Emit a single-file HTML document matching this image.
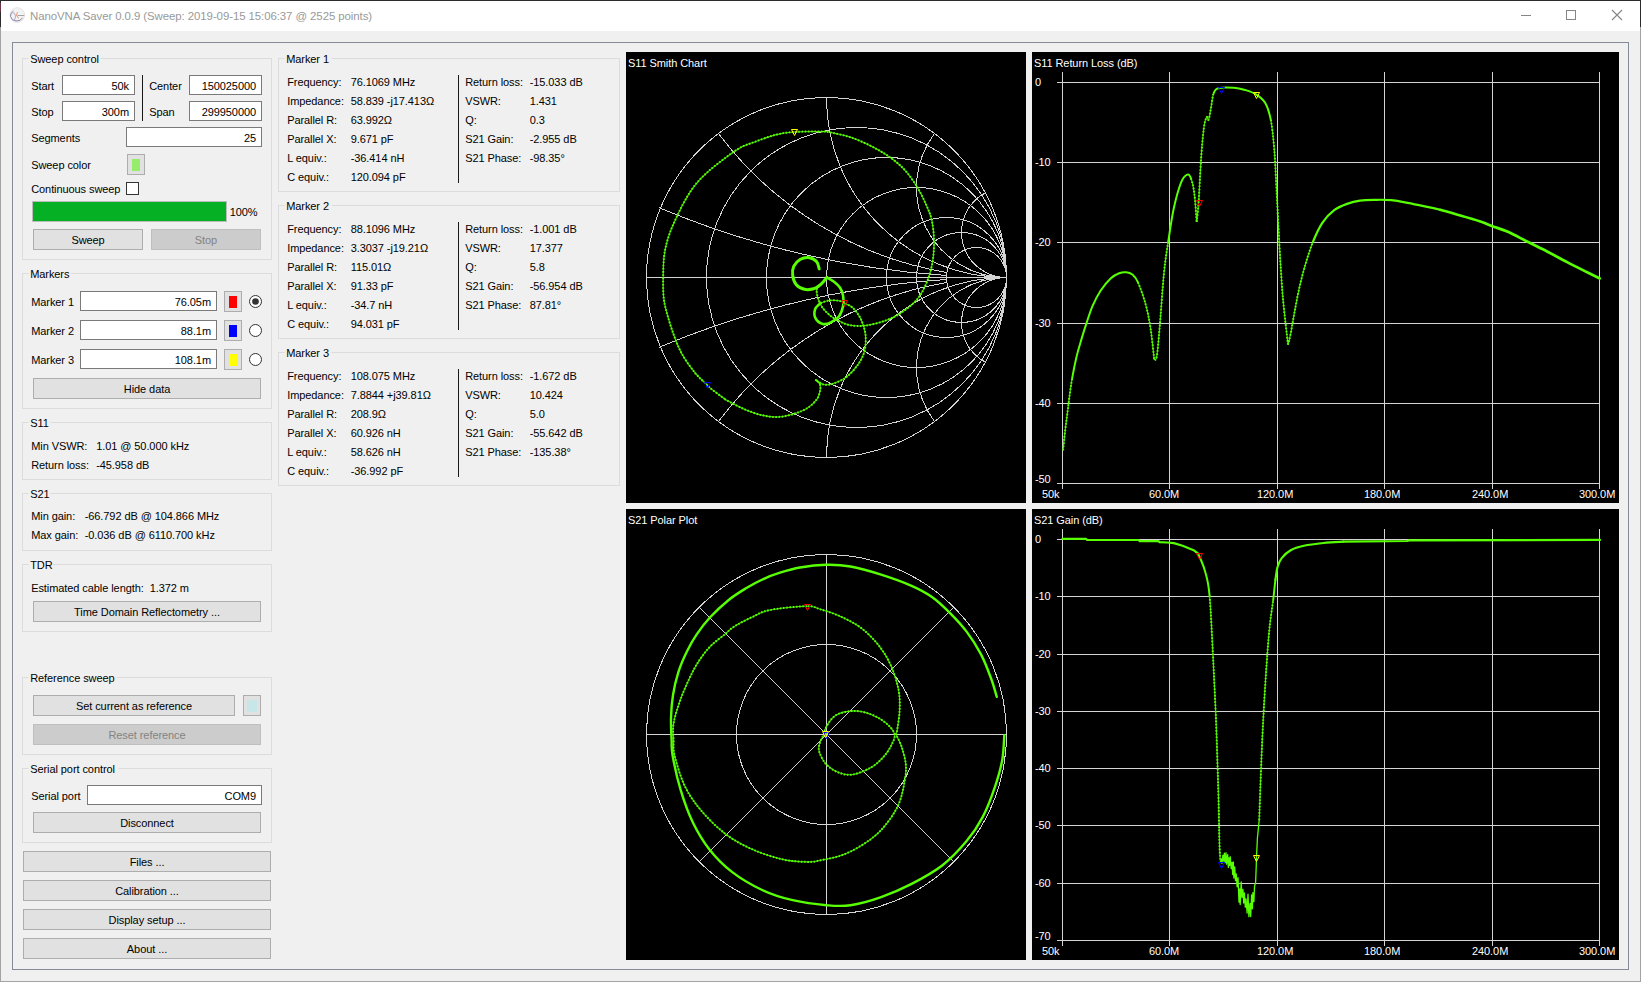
<!DOCTYPE html>
<html><head><meta charset="utf-8"><title>NanoVNA Saver</title>
<style>html,body{margin:0;padding:0;background:#f0f0f0;overflow:hidden}svg{display:block}text{font-family:"Liberation Sans",sans-serif;font-size:11px;letter-spacing:-0.08px}</style>
</head><body>
<svg width="1641" height="982" viewBox="0 0 1641 982">
<rect x="0" y="0" width="1641" height="982" fill="#f0f0f0"/>
<rect x="0" y="0" width="1641" height="31" fill="#ffffff"/>
<rect x="0" y="0" width="1641" height="1" fill="#2b2b2b"/>
<rect x="0" y="0" width="1" height="982" fill="#a3a3a3"/>
<rect x="0" y="0" width="1" height="27" fill="#2b2b2b"/>
<rect x="0" y="3" width="1" height="9" fill="#6a3040"/>
<rect x="1640" y="0" width="1" height="982" fill="#a3a3a3"/>
<rect x="1640" y="0" width="1" height="27" fill="#2b2b2b"/>
<rect x="0" y="981" width="1641" height="1" fill="#a3a3a3"/>
<g><circle cx="17.3" cy="15" r="7.3" fill="#f3f3f3" stroke="#dedede" stroke-width="0.8"/><path d="M17.5,15.5 L24.3,15.5" stroke="#9a9aa2" stroke-width="0.9"/><path d="M13.5,11 Q10,13 10.5,16.5 Q11.5,20.5 16,21 Q20.5,21.2 22.5,18" fill="none" stroke="#8c86aa" stroke-width="1"/><path d="M12.5,13 Q15,12 15.5,16 Q15.5,19 14,20.5" fill="none" stroke="#a49cc0" stroke-width="0.8"/><path d="M17.6,12 L16.4,15 L18.6,18.5" fill="none" stroke="#e0906a" stroke-width="0.9"/></g>
<text x="30" y="20" fill="#999999" font-size="12.8" textLength="342" lengthAdjust="spacingAndGlyphs">NanoVNA Saver 0.0.9 (Sweep: 2019-09-15 15:06:37 @ 2525 points)</text>
<rect x="1521" y="15" width="10" height="1" fill="#858585"/>
<rect x="1566.5" y="10.5" width="9" height="9" fill="none" stroke="#858585" stroke-width="1"/>
<path d="M1612,10 L1622,20 M1622,10 L1612,20" stroke="#858585" stroke-width="1.1"/>
<rect x="12.5" y="42.5" width="1616" height="927" fill="none" stroke="#838b96" stroke-width="1"/>
<rect x="22" y="58" width="1" height="202" fill="#dcdcdc"/>
<rect x="271" y="58" width="1" height="202" fill="#dcdcdc"/>
<rect x="22" y="259" width="250" height="1" fill="#dcdcdc"/>
<rect x="22" y="58" width="6.5" height="1" fill="#dcdcdc"/>
<rect x="100.5" y="58" width="171.5" height="1" fill="#dcdcdc"/>
<text x="30.2" y="63">Sweep control</text>
<text x="31.2" y="90">Start</text>
<text x="31.2" y="116">Stop</text>
<rect x="62" y="75" width="73" height="20" fill="#7a7a7a"/>
<rect x="63" y="76" width="71" height="18" fill="#fff"/>
<text x="129" y="90" text-anchor="end">50k</text>
<rect x="62" y="101" width="73" height="20" fill="#7a7a7a"/>
<rect x="63" y="102" width="71" height="18" fill="#fff"/>
<text x="129" y="116" text-anchor="end">300m</text>
<rect x="142" y="75" width="1" height="46" fill="#1a1a1a"/>
<text x="149.2" y="90">Center</text>
<text x="149.2" y="116">Span</text>
<rect x="189" y="75" width="73" height="20" fill="#7a7a7a"/>
<rect x="190" y="76" width="71" height="18" fill="#fff"/>
<text x="256" y="90" text-anchor="end">150025000</text>
<rect x="189" y="101" width="73" height="20" fill="#7a7a7a"/>
<rect x="190" y="102" width="71" height="18" fill="#fff"/>
<text x="256" y="116" text-anchor="end">299950000</text>
<text x="31.2" y="142">Segments</text>
<rect x="126" y="127" width="136" height="20" fill="#7a7a7a"/>
<rect x="127" y="128" width="134" height="18" fill="#fff"/>
<text x="256" y="142" text-anchor="end">25</text>
<text x="31.2" y="169">Sweep color</text>
<rect x="127" y="154" width="18" height="21" fill="#adadad"/>
<rect x="128" y="155" width="16" height="19" fill="#e1e1e1"/>
<rect x="132" y="159" width="8" height="12" fill="#98ec6c"/>
<text x="31.2" y="193">Continuous sweep</text>
<rect x="126" y="182" width="13" height="13" fill="#333333"/>
<rect x="127" y="183" width="11" height="11" fill="#fff"/>
<rect x="32" y="201" width="195" height="21" fill="#bcbcbc"/>
<rect x="33" y="202" width="193" height="19" fill="#06b025"/>
<text x="229.7" y="216">100%</text>
<rect x="33" y="229" width="110" height="21" fill="#adadad"/>
<rect x="34" y="230" width="108" height="19" fill="#e1e1e1"/>
<text x="88.0" y="244" text-anchor="middle">Sweep</text>
<rect x="151" y="229" width="110" height="21" fill="#bfbfbf"/>
<rect x="152" y="230" width="108" height="19" fill="#cccccc"/>
<text x="206.0" y="244" text-anchor="middle" fill="#838383">Stop</text>
<rect x="22" y="273" width="1" height="136" fill="#dcdcdc"/>
<rect x="271" y="273" width="1" height="136" fill="#dcdcdc"/>
<rect x="22" y="408" width="250" height="1" fill="#dcdcdc"/>
<rect x="22" y="273" width="6.5" height="1" fill="#dcdcdc"/>
<rect x="70.5" y="273" width="201.5" height="1" fill="#dcdcdc"/>
<text x="30.2" y="278">Markers</text>
<text x="31.2" y="306">Marker 1</text>
<rect x="80" y="291" width="137" height="20" fill="#7a7a7a"/>
<rect x="81" y="292" width="135" height="18" fill="#fff"/>
<text x="211" y="306" text-anchor="end">76.05m</text>
<rect x="224" y="291" width="18" height="21" fill="#adadad"/>
<rect x="225" y="292" width="16" height="19" fill="#e1e1e1"/>
<rect x="229" y="296" width="8" height="12" fill="#ff0000"/>
<circle cx="255.5" cy="301.5" r="6" fill="#fff" stroke="#333" stroke-width="1"/>
<circle cx="255.5" cy="301.5" r="3.3" fill="#333"/>
<text x="31.2" y="335">Marker 2</text>
<rect x="80" y="320" width="137" height="20" fill="#7a7a7a"/>
<rect x="81" y="321" width="135" height="18" fill="#fff"/>
<text x="211" y="335" text-anchor="end">88.1m</text>
<rect x="224" y="320" width="18" height="21" fill="#adadad"/>
<rect x="225" y="321" width="16" height="19" fill="#e1e1e1"/>
<rect x="229" y="325" width="8" height="12" fill="#0000ff"/>
<circle cx="255.5" cy="330.5" r="6" fill="#fff" stroke="#333" stroke-width="1"/>
<text x="31.2" y="364">Marker 3</text>
<rect x="80" y="349" width="137" height="20" fill="#7a7a7a"/>
<rect x="81" y="350" width="135" height="18" fill="#fff"/>
<text x="211" y="364" text-anchor="end">108.1m</text>
<rect x="224" y="349" width="18" height="21" fill="#adadad"/>
<rect x="225" y="350" width="16" height="19" fill="#e1e1e1"/>
<rect x="229" y="354" width="8" height="12" fill="#ffff00"/>
<circle cx="255.5" cy="359.5" r="6" fill="#fff" stroke="#333" stroke-width="1"/>
<rect x="33" y="378" width="228" height="21" fill="#adadad"/>
<rect x="34" y="379" width="226" height="19" fill="#e1e1e1"/>
<text x="147.0" y="393" text-anchor="middle">Hide data</text>
<rect x="22" y="422" width="1" height="58" fill="#dcdcdc"/>
<rect x="271" y="422" width="1" height="58" fill="#dcdcdc"/>
<rect x="22" y="479" width="250" height="1" fill="#dcdcdc"/>
<rect x="22" y="422" width="6.5" height="1" fill="#dcdcdc"/>
<rect x="50.5" y="422" width="221.5" height="1" fill="#dcdcdc"/>
<text x="30.2" y="427">S11</text>
<text x="31.2" y="450">Min VSWR:</text>
<text x="96.2" y="450">1.01 @ 50.000 kHz</text>
<text x="31.2" y="469">Return loss:</text>
<text x="96.2" y="469">-45.958 dB</text>
<rect x="22" y="493" width="1" height="58" fill="#dcdcdc"/>
<rect x="271" y="493" width="1" height="58" fill="#dcdcdc"/>
<rect x="22" y="550" width="250" height="1" fill="#dcdcdc"/>
<rect x="22" y="493" width="6.5" height="1" fill="#dcdcdc"/>
<rect x="50.5" y="493" width="221.5" height="1" fill="#dcdcdc"/>
<text x="30.2" y="498">S21</text>
<text x="31.2" y="520">Min gain:</text>
<text x="84.7" y="520">-66.792 dB @ 104.866 MHz</text>
<text x="31.2" y="539">Max gain:</text>
<text x="84.7" y="539">-0.036 dB @ 6110.700 kHz</text>
<rect x="22" y="564" width="1" height="68" fill="#dcdcdc"/>
<rect x="271" y="564" width="1" height="68" fill="#dcdcdc"/>
<rect x="22" y="631" width="250" height="1" fill="#dcdcdc"/>
<rect x="22" y="564" width="6.5" height="1" fill="#dcdcdc"/>
<rect x="52.5" y="564" width="219.5" height="1" fill="#dcdcdc"/>
<text x="30.2" y="569">TDR</text>
<text x="31.2" y="592">Estimated cable length:</text>
<text x="149.7" y="592">1.372 m</text>
<rect x="33" y="601" width="228" height="21" fill="#adadad"/>
<rect x="34" y="602" width="226" height="19" fill="#e1e1e1"/>
<text x="147.0" y="616" text-anchor="middle">Time Domain Reflectometry ...</text>
<rect x="22" y="677" width="1" height="78" fill="#dcdcdc"/>
<rect x="271" y="677" width="1" height="78" fill="#dcdcdc"/>
<rect x="22" y="754" width="250" height="1" fill="#dcdcdc"/>
<rect x="22" y="677" width="6.5" height="1" fill="#dcdcdc"/>
<rect x="116.5" y="677" width="155.5" height="1" fill="#dcdcdc"/>
<text x="30.2" y="682">Reference sweep</text>
<rect x="33" y="695" width="202" height="21" fill="#adadad"/>
<rect x="34" y="696" width="200" height="19" fill="#e1e1e1"/>
<text x="134.0" y="710" text-anchor="middle">Set current as reference</text>
<rect x="243" y="695" width="18" height="21" fill="#adadad"/>
<rect x="244" y="696" width="16" height="19" fill="#e1e1e1"/>
<rect x="247" y="700" width="10" height="12" fill="#c6e6e8"/>
<rect x="33" y="724" width="228" height="21" fill="#bfbfbf"/>
<rect x="34" y="725" width="226" height="19" fill="#cccccc"/>
<text x="147.0" y="739" text-anchor="middle" fill="#838383">Reset reference</text>
<rect x="22" y="768" width="1" height="75" fill="#dcdcdc"/>
<rect x="271" y="768" width="1" height="75" fill="#dcdcdc"/>
<rect x="22" y="842" width="250" height="1" fill="#dcdcdc"/>
<rect x="22" y="768" width="6.5" height="1" fill="#dcdcdc"/>
<rect x="118.5" y="768" width="153.5" height="1" fill="#dcdcdc"/>
<text x="30.2" y="773">Serial port control</text>
<text x="31.2" y="800">Serial port</text>
<rect x="87" y="785" width="175" height="20" fill="#7a7a7a"/>
<rect x="88" y="786" width="173" height="18" fill="#fff"/>
<text x="256" y="800" text-anchor="end">COM9</text>
<rect x="33" y="812" width="228" height="21" fill="#adadad"/>
<rect x="34" y="813" width="226" height="19" fill="#e1e1e1"/>
<text x="147.0" y="827" text-anchor="middle">Disconnect</text>
<rect x="23" y="851" width="248" height="21" fill="#adadad"/>
<rect x="24" y="852" width="246" height="19" fill="#e1e1e1"/>
<text x="147.0" y="866" text-anchor="middle">Files ...</text>
<rect x="23" y="880" width="248" height="21" fill="#adadad"/>
<rect x="24" y="881" width="246" height="19" fill="#e1e1e1"/>
<text x="147.0" y="895" text-anchor="middle">Calibration ...</text>
<rect x="23" y="909" width="248" height="21" fill="#adadad"/>
<rect x="24" y="910" width="246" height="19" fill="#e1e1e1"/>
<text x="147.0" y="924" text-anchor="middle">Display setup ...</text>
<rect x="23" y="938" width="248" height="21" fill="#adadad"/>
<rect x="24" y="939" width="246" height="19" fill="#e1e1e1"/>
<text x="147.0" y="953" text-anchor="middle">About ...</text>
<rect x="278" y="58" width="1" height="134" fill="#dcdcdc"/>
<rect x="619" y="58" width="1" height="134" fill="#dcdcdc"/>
<rect x="278" y="191" width="342" height="1" fill="#dcdcdc"/>
<rect x="278" y="58" width="6.5" height="1" fill="#dcdcdc"/>
<rect x="331.5" y="58" width="288.5" height="1" fill="#dcdcdc"/>
<text x="286.2" y="63">Marker 1</text>
<text x="287.2" y="86">Frequency:</text>
<text x="350.7" y="86">76.1069 MHz</text>
<text x="287.2" y="105">Impedance:</text>
<text x="350.7" y="105">58.839 -j17.413Ω</text>
<text x="287.2" y="124">Parallel R:</text>
<text x="350.7" y="124">63.992Ω</text>
<text x="287.2" y="143">Parallel X:</text>
<text x="350.7" y="143">9.671 pF</text>
<text x="287.2" y="162">L equiv.:</text>
<text x="350.7" y="162">-36.414 nH</text>
<text x="287.2" y="181">C equiv.:</text>
<text x="350.7" y="181">120.094 pF</text>
<text x="465.2" y="86">Return loss:</text>
<text x="529.7" y="86">-15.033 dB</text>
<text x="465.2" y="105">VSWR:</text>
<text x="529.7" y="105">1.431</text>
<text x="465.2" y="124">Q:</text>
<text x="529.7" y="124">0.3</text>
<text x="465.2" y="143">S21 Gain:</text>
<text x="529.7" y="143">-2.955 dB</text>
<text x="465.2" y="162">S21 Phase:</text>
<text x="529.7" y="162">-98.35°</text>
<rect x="458" y="75" width="1" height="108" fill="#1a1a1a"/>
<rect x="278" y="205" width="1" height="134" fill="#dcdcdc"/>
<rect x="619" y="205" width="1" height="134" fill="#dcdcdc"/>
<rect x="278" y="338" width="342" height="1" fill="#dcdcdc"/>
<rect x="278" y="205" width="6.5" height="1" fill="#dcdcdc"/>
<rect x="331.5" y="205" width="288.5" height="1" fill="#dcdcdc"/>
<text x="286.2" y="210">Marker 2</text>
<text x="287.2" y="233">Frequency:</text>
<text x="350.7" y="233">88.1096 MHz</text>
<text x="287.2" y="252">Impedance:</text>
<text x="350.7" y="252">3.3037 -j19.21Ω</text>
<text x="287.2" y="271">Parallel R:</text>
<text x="350.7" y="271">115.01Ω</text>
<text x="287.2" y="290">Parallel X:</text>
<text x="350.7" y="290">91.33 pF</text>
<text x="287.2" y="309">L equiv.:</text>
<text x="350.7" y="309">-34.7 nH</text>
<text x="287.2" y="328">C equiv.:</text>
<text x="350.7" y="328">94.031 pF</text>
<text x="465.2" y="233">Return loss:</text>
<text x="529.7" y="233">-1.001 dB</text>
<text x="465.2" y="252">VSWR:</text>
<text x="529.7" y="252">17.377</text>
<text x="465.2" y="271">Q:</text>
<text x="529.7" y="271">5.8</text>
<text x="465.2" y="290">S21 Gain:</text>
<text x="529.7" y="290">-56.954 dB</text>
<text x="465.2" y="309">S21 Phase:</text>
<text x="529.7" y="309">87.81°</text>
<rect x="458" y="222" width="1" height="108" fill="#1a1a1a"/>
<rect x="278" y="352" width="1" height="134" fill="#dcdcdc"/>
<rect x="619" y="352" width="1" height="134" fill="#dcdcdc"/>
<rect x="278" y="485" width="342" height="1" fill="#dcdcdc"/>
<rect x="278" y="352" width="6.5" height="1" fill="#dcdcdc"/>
<rect x="331.5" y="352" width="288.5" height="1" fill="#dcdcdc"/>
<text x="286.2" y="357">Marker 3</text>
<text x="287.2" y="380">Frequency:</text>
<text x="350.7" y="380">108.075 MHz</text>
<text x="287.2" y="399">Impedance:</text>
<text x="350.7" y="399">7.8844 +j39.81Ω</text>
<text x="287.2" y="418">Parallel R:</text>
<text x="350.7" y="418">208.9Ω</text>
<text x="287.2" y="437">Parallel X:</text>
<text x="350.7" y="437">60.926 nH</text>
<text x="287.2" y="456">L equiv.:</text>
<text x="350.7" y="456">58.626 nH</text>
<text x="287.2" y="475">C equiv.:</text>
<text x="350.7" y="475">-36.992 pF</text>
<text x="465.2" y="380">Return loss:</text>
<text x="529.7" y="380">-1.672 dB</text>
<text x="465.2" y="399">VSWR:</text>
<text x="529.7" y="399">10.424</text>
<text x="465.2" y="418">Q:</text>
<text x="529.7" y="418">5.0</text>
<text x="465.2" y="437">S21 Gain:</text>
<text x="529.7" y="437">-55.642 dB</text>
<text x="465.2" y="456">S21 Phase:</text>
<text x="529.7" y="456">-135.38°</text>
<rect x="458" y="369" width="1" height="108" fill="#1a1a1a"/>
<rect x="626" y="52" width="400" height="451" fill="#000"/>
<text x="628" y="67" fill="#fff">S11 Smith Chart</text>
<g fill="none" stroke="#d4d4d4" stroke-width="1" shape-rendering="crispEdges"><circle cx="826.5" cy="277.5" r="180"/><circle cx="856.5" cy="277.5" r="150"/><circle cx="886.5" cy="277.5" r="120"/><circle cx="916.5" cy="277.5" r="90"/><circle cx="946.5" cy="277.5" r="60"/><circle cx="961.5" cy="277.5" r="45"/><circle cx="976.5" cy="277.5" r="30"/><path d="M1006.50,277.50 A45,45 0 0 0 985.37,362.23"/><path d="M1006.50,277.50 A45,45 0 0 1 985.37,192.77"/><path d="M1006.50,277.50 A90,90 0 0 0 934.62,421.66"/><path d="M1006.50,277.50 A90,90 0 0 1 934.62,133.34"/><path d="M1006.50,277.50 A180,180 0 0 0 826.50,457.50"/><path d="M1006.50,277.50 A180,180 0 0 1 826.50,97.50"/><path d="M947.08,282.44 A360,360 0 0 0 718.99,420.85"/><path d="M947.08,272.56 A360,360 0 0 1 718.99,134.15"/><path d="M946.07,279.53 A900,900 0 0 0 659.18,347.22"/><path d="M946.07,275.47 A900,900 0 0 1 659.18,207.78"/></g>
<rect x="646" y="277" width="361" height="1" fill="#d4d4d4"/>
<rect x="1032" y="52" width="587" height="451" fill="#000"/>
<text x="1034" y="67" fill="#fff">S11 Return Loss (dB)</text>
<rect x="1057" y="82" width="543" height="1" fill="#d4d4d4"/>
<rect x="1057" y="162" width="543" height="1" fill="#d4d4d4"/>
<rect x="1057" y="242" width="543" height="1" fill="#d4d4d4"/>
<rect x="1057" y="323" width="543" height="1" fill="#d4d4d4"/>
<rect x="1057" y="403" width="543" height="1" fill="#d4d4d4"/>
<rect x="1057" y="483" width="543" height="1" fill="#d4d4d4"/>
<rect x="1062" y="72" width="1" height="417" fill="#d4d4d4"/>
<rect x="1169" y="72" width="1" height="417" fill="#d4d4d4"/>
<rect x="1277" y="72" width="1" height="417" fill="#d4d4d4"/>
<rect x="1384" y="72" width="1" height="417" fill="#d4d4d4"/>
<rect x="1492" y="72" width="1" height="417" fill="#d4d4d4"/>
<rect x="1599" y="72" width="1" height="417" fill="#d4d4d4"/>
<text x="1035" y="86" fill="#fff">0</text>
<text x="1035" y="166" fill="#fff">-10</text>
<text x="1035" y="246" fill="#fff">-20</text>
<text x="1035" y="327" fill="#fff">-30</text>
<text x="1035" y="407" fill="#fff">-40</text>
<text x="1035" y="483" fill="#fff">-50</text>
<text x="1042" y="498" fill="#fff">50k</text>
<text x="1149" y="498" fill="#fff">60.0M</text>
<text x="1257" y="498" fill="#fff">120.0M</text>
<text x="1364" y="498" fill="#fff">180.0M</text>
<text x="1472" y="498" fill="#fff">240.0M</text>
<text x="1579" y="498" fill="#fff">300.0M</text>
<rect x="626" y="509" width="400" height="451" fill="#000"/>
<text x="628" y="524" fill="#fff">S21 Polar Plot</text>
<g fill="none" stroke="#d4d4d4" stroke-width="1" shape-rendering="crispEdges"><circle cx="826.5" cy="734.5" r="180"/><circle cx="826.5" cy="734.5" r="90"/><path d="M699.5,861.5 L953.5,607.5 M699.5,607.5 L953.5,861.5"/></g>
<rect x="646" y="734" width="361" height="1" fill="#d4d4d4"/>
<rect x="826" y="554" width="1" height="361" fill="#d4d4d4"/>
<rect x="1032" y="509" width="587" height="451" fill="#000"/>
<text x="1034" y="524" fill="#fff">S21 Gain (dB)</text>
<rect x="1057" y="539" width="543" height="1" fill="#d4d4d4"/>
<rect x="1057" y="596" width="543" height="1" fill="#d4d4d4"/>
<rect x="1057" y="654" width="543" height="1" fill="#d4d4d4"/>
<rect x="1057" y="711" width="543" height="1" fill="#d4d4d4"/>
<rect x="1057" y="768" width="543" height="1" fill="#d4d4d4"/>
<rect x="1057" y="825" width="543" height="1" fill="#d4d4d4"/>
<rect x="1057" y="883" width="543" height="1" fill="#d4d4d4"/>
<rect x="1057" y="940" width="543" height="1" fill="#d4d4d4"/>
<rect x="1062" y="529" width="1" height="417" fill="#d4d4d4"/>
<rect x="1169" y="529" width="1" height="417" fill="#d4d4d4"/>
<rect x="1277" y="529" width="1" height="417" fill="#d4d4d4"/>
<rect x="1384" y="529" width="1" height="417" fill="#d4d4d4"/>
<rect x="1492" y="529" width="1" height="417" fill="#d4d4d4"/>
<rect x="1599" y="529" width="1" height="417" fill="#d4d4d4"/>
<text x="1035" y="543" fill="#fff">0</text>
<text x="1035" y="600" fill="#fff">-10</text>
<text x="1035" y="658" fill="#fff">-20</text>
<text x="1035" y="715" fill="#fff">-30</text>
<text x="1035" y="772" fill="#fff">-40</text>
<text x="1035" y="829" fill="#fff">-50</text>
<text x="1035" y="887" fill="#fff">-60</text>
<text x="1035" y="940" fill="#fff">-70</text>
<text x="1042" y="955" fill="#fff">50k</text>
<text x="1149" y="955" fill="#fff">60.0M</text>
<text x="1257" y="955" fill="#fff">120.0M</text>
<text x="1364" y="955" fill="#fff">180.0M</text>
<text x="1472" y="955" fill="#fff">240.0M</text>
<text x="1579" y="955" fill="#fff">300.0M</text>
<path d="M1063.1,450.3 C1063.4,447.1 1064.4,436.9 1065.1,431.0 C1065.8,425.1 1066.5,420.1 1067.2,414.7 C1067.9,409.3 1068.4,404.5 1069.2,398.4 C1070.0,392.3 1071.0,384.9 1072.2,378.1" fill="none" stroke="#57ff00" stroke-width="1.1" stroke-opacity="0.85" stroke-linejoin="round"/>
<path d="M1063.1,450.3 C1063.4,447.1 1064.4,436.9 1065.1,431.0 C1065.8,425.1 1066.5,420.1 1067.2,414.7 C1067.9,409.3 1068.4,404.5 1069.2,398.4 C1070.0,392.3 1071.0,384.9 1072.2,378.1" fill="none" stroke="#57ff00" stroke-width="2" stroke-dasharray="1.6 1.6" stroke-linejoin="round"/>
<path d="M1072.2,378.1 C1073.4,371.3 1074.8,364.1 1076.3,357.7 C1077.8,351.2 1079.7,345.2 1081.4,339.4 C1083.1,333.6 1084.6,328.7 1086.5,323.1 C1088.4,317.5 1090.2,311.2 1092.6,305.8 C1095.0,300.4 1097.7,295.1 1100.7,290.5 C1103.8,285.9 1107.8,281.2 1110.9,278.3 C1114.0,275.4 1116.5,274.2 1119.1,273.2 C1121.6,272.2 1124.0,272.0 1126.2,272.2 C1128.4,272.4 1130.3,272.7 1132.3,274.4 C1134.3,276.1 1135.8,277.3 1138.0,282.4" fill="none" stroke="#57ff00" stroke-width="2.0" stroke-linejoin="round" stroke-linecap="round"/>
<path d="M1138.0,282.4 C1140.2,287.5 1143.7,297.1 1145.8,304.9 C1147.9,312.7 1149.3,320.1 1150.7,329.3 C1152.1,338.5 1153.7,354.8 1154.3,359.9" fill="none" stroke="#57ff00" stroke-width="1.1" stroke-opacity="0.85" stroke-linejoin="round"/>
<path d="M1138.0,282.4 C1140.2,287.5 1143.7,297.1 1145.8,304.9 C1147.9,312.7 1149.3,320.1 1150.7,329.3 C1152.1,338.5 1153.7,354.8 1154.3,359.9" fill="none" stroke="#57ff00" stroke-width="2" stroke-dasharray="1.6 1.6" stroke-linejoin="round"/>
<path d="M1154.3,359.9 C1154.7,359.3 1155.9,361.5 1156.8,356.2 C1157.7,350.9 1158.4,341.8 1159.6,328.1 C1160.8,314.4 1162.5,288.2 1163.9,273.9 C1165.3,259.6 1166.4,253.4 1168.1,242.5" fill="none" stroke="#57ff00" stroke-width="1.1" stroke-opacity="0.85" stroke-linejoin="round"/>
<path d="M1154.3,359.9 C1154.7,359.3 1155.9,361.5 1156.8,356.2 C1157.7,350.9 1158.4,341.8 1159.6,328.1 C1160.8,314.4 1162.5,288.2 1163.9,273.9 C1165.3,259.6 1166.4,253.4 1168.1,242.5" fill="none" stroke="#57ff00" stroke-width="2" stroke-dasharray="1.6 1.6" stroke-linejoin="round"/>
<path d="M1168.1,242.5 C1169.8,231.6 1171.6,218.3 1173.8,208.3 C1176.0,198.3 1178.8,188.3 1181.0,182.7 C1183.2,177.1 1185.5,175.4 1187.2,174.7 C1188.9,174.0 1189.8,175.2 1191.0,178.4" fill="none" stroke="#57ff00" stroke-width="2.0" stroke-linejoin="round" stroke-linecap="round"/>
<path d="M1191.0,178.4 C1192.2,181.6 1193.5,186.8 1194.4,194.1 C1195.4,201.4 1196.3,217.3 1196.7,222.0" fill="none" stroke="#57ff00" stroke-width="1.1" stroke-opacity="0.85" stroke-linejoin="round"/>
<path d="M1191.0,178.4 C1192.2,181.6 1193.5,186.8 1194.4,194.1 C1195.4,201.4 1196.3,217.3 1196.7,222.0" fill="none" stroke="#57ff00" stroke-width="2" stroke-dasharray="1.6 1.6" stroke-linejoin="round"/>
<path d="M1196.7,222.0 C1197.0,218.5 1198.0,211.6 1198.7,201.2 C1199.4,190.8 1200.2,171.9 1201.0,159.8 C1201.8,147.7 1202.9,135.6 1203.8,128.5 C1204.7,121.4 1205.8,118.5 1206.6,117.1 C1207.4,115.7 1207.9,121.3 1208.6,119.9 C1209.3,118.5 1210.0,113.0 1210.9,108.5 C1211.8,104.0 1212.4,96.2 1213.8,92.8" fill="none" stroke="#57ff00" stroke-width="1.1" stroke-opacity="0.85" stroke-linejoin="round"/>
<path d="M1196.7,222.0 C1197.0,218.5 1198.0,211.6 1198.7,201.2 C1199.4,190.8 1200.2,171.9 1201.0,159.8 C1201.8,147.7 1202.9,135.6 1203.8,128.5 C1204.7,121.4 1205.8,118.5 1206.6,117.1 C1207.4,115.7 1207.9,121.3 1208.6,119.9 C1209.3,118.5 1210.0,113.0 1210.9,108.5 C1211.8,104.0 1212.4,96.2 1213.8,92.8" fill="none" stroke="#57ff00" stroke-width="2" stroke-dasharray="1.6 1.6" stroke-linejoin="round"/>
<path d="M1213.8,92.8 C1215.2,89.4 1216.2,88.8 1219.5,88.0 C1222.8,87.2 1229.4,87.4 1233.7,87.7 C1238.0,88.0 1241.4,88.9 1245.1,90.0 C1248.8,91.1 1252.7,92.2 1256.0,94.3 C1259.3,96.4 1262.6,98.5 1265.1,102.8 C1267.6,107.1 1269.3,112.3 1270.8,119.9" fill="none" stroke="#57ff00" stroke-width="2.0" stroke-linejoin="round" stroke-linecap="round"/>
<path d="M1270.8,119.9 C1272.3,127.5 1273.2,137.0 1274.2,148.4 C1275.2,159.8 1275.6,172.2 1276.5,188.4 C1277.4,204.6 1278.4,227.4 1279.4,245.4 C1280.5,263.4 1281.4,280.3 1282.8,296.7 C1284.2,313.1 1287.1,335.9 1287.9,343.8" fill="none" stroke="#57ff00" stroke-width="1.1" stroke-opacity="0.85" stroke-linejoin="round"/>
<path d="M1270.8,119.9 C1272.3,127.5 1273.2,137.0 1274.2,148.4 C1275.2,159.8 1275.6,172.2 1276.5,188.4 C1277.4,204.6 1278.4,227.4 1279.4,245.4 C1280.5,263.4 1281.4,280.3 1282.8,296.7 C1284.2,313.1 1287.1,335.9 1287.9,343.8" fill="none" stroke="#57ff00" stroke-width="2" stroke-dasharray="1.6 1.6" stroke-linejoin="round"/>
<path d="M1287.9,344.8 C1288.4,342.9 1289.6,339.2 1290.7,333.5 C1291.8,327.8 1293.3,318.6 1294.8,310.7 C1296.3,302.8 1297.8,294.4 1299.7,286.2 C1301.6,278.0 1303.9,269.3 1306.2,261.7 C1308.5,254.1 1310.8,247.0 1313.5,240.5" fill="none" stroke="#57ff00" stroke-width="1.1" stroke-opacity="0.85" stroke-linejoin="round"/>
<path d="M1287.9,344.8 C1288.4,342.9 1289.6,339.2 1290.7,333.5 C1291.8,327.8 1293.3,318.6 1294.8,310.7 C1296.3,302.8 1297.8,294.4 1299.7,286.2 C1301.6,278.0 1303.9,269.3 1306.2,261.7 C1308.5,254.1 1310.8,247.0 1313.5,240.5" fill="none" stroke="#57ff00" stroke-width="2" stroke-dasharray="1.6 1.6" stroke-linejoin="round"/>
<path d="M1313.5,240.5 C1316.2,234.0 1319.1,227.6 1322.5,222.6 C1325.9,217.6 1329.8,213.5 1333.9,210.4 C1338.0,207.3 1342.7,205.5 1347.0,203.9 C1351.3,202.3 1355.1,201.3 1360.0,200.6 C1364.9,199.9 1371.1,199.9 1376.3,199.8 C1381.5,199.7 1386.2,199.7 1391.0,200.1 C1395.8,200.5 1400.2,201.5 1405.0,202.4 C1409.8,203.3 1414.2,204.2 1420.1,205.4 C1426.0,206.6 1433.5,208.1 1440.2,209.8" fill="none" stroke="#57ff00" stroke-width="2.2" stroke-linejoin="round" stroke-linecap="round"/>
<path d="M1440.2,209.8 C1446.9,211.5 1453.6,213.6 1460.3,215.5 C1467.0,217.4 1475.0,219.7 1480.4,221.5 C1485.8,223.3 1488.0,224.5 1492.5,226.2 C1497.0,227.9 1501.3,228.9 1507.3,231.6 C1513.3,234.3 1522.0,239.0 1528.7,242.3 C1535.4,245.7 1541.0,248.3 1547.5,251.7 C1554.0,255.0 1560.9,258.9 1567.6,262.4 C1574.3,265.9 1582.3,269.8 1587.7,272.5 C1593.1,275.2 1597.8,277.5 1599.8,278.5" fill="none" stroke="#57ff00" stroke-width="2.7" stroke-linejoin="round" stroke-linecap="round"/>
<path d="M1196.5,200.5 L1202.5,200.5 L1199.5,206.5 Z" fill="none" stroke="#ff0000" stroke-width="1"/>
<path d="M1218.5,87.5 L1224.5,87.5 L1221.5,93.5 Z" fill="none" stroke="#0000ff" stroke-width="1"/>
<path d="M1253.5,92.5 L1259.5,92.5 L1256.5,98.5 Z" fill="none" stroke="#ffff00" stroke-width="1"/>
<path d="M1062.5,538.9 L1086.0,538.9 L1087.2,540.0 L1138.7,540.0 L1139.8,541.1 L1158.5,541.1 L1159.6,542.2 L1167.2,542.5 L1173.8,543.1 L1182.6,545.8 L1193.6,550.2 L1198.0,553.5 L1200.1,557.9" fill="none" stroke="#57ff00" stroke-width="2.2" stroke-linejoin="round" stroke-linecap="round"/>
<path d="M1200.1,557.9 C1201.3,561.0 1203.8,566.1 1205.4,572.4 C1207.0,578.7 1208.3,581.6 1209.6,595.9" fill="none" stroke="#57ff00" stroke-width="2.0" stroke-linejoin="round" stroke-linecap="round"/>
<path d="M1209.6,595.9 C1210.9,610.2 1212.0,637.0 1213.1,658.0 C1214.2,679.0 1215.2,700.7 1216.1,722.1 C1216.9,743.5 1217.6,765.9 1218.2,786.3 C1218.8,806.7 1219.1,831.9 1219.5,844.4 C1219.9,856.9 1220.3,858.6 1220.5,861.5" fill="none" stroke="#57ff00" stroke-width="1.1" stroke-opacity="0.85" stroke-linejoin="round"/>
<path d="M1209.6,595.9 C1210.9,610.2 1212.0,637.0 1213.1,658.0 C1214.2,679.0 1215.2,700.7 1216.1,722.1 C1216.9,743.5 1217.6,765.9 1218.2,786.3 C1218.8,806.7 1219.1,831.9 1219.5,844.4 C1219.9,856.9 1220.3,858.6 1220.5,861.5" fill="none" stroke="#57ff00" stroke-width="2" stroke-dasharray="1.6 1.6" stroke-linejoin="round"/>
<path d="M1220.5,861.5 L1221.0,862.9 L1221.6,858.8 L1222.1,863.1 L1222.9,855.1 L1223.7,861.0 L1224.4,853.1 L1225.0,862.7 L1226.0,852.7 L1226.6,864.2 L1227.7,854.6 L1228.4,867.4 L1228.9,857.8 L1229.6,865.3 L1230.2,856.6 L1231.2,868.6 L1232.0,862.5 L1232.7,874.5 L1233.3,861.9 L1233.9,878.0 L1234.7,866.8 L1235.5,880.6 L1236.2,873.8 L1237.1,886.8 L1238.0,877.7 L1239.0,902.1 L1239.7,888.9 L1240.2,904.5 L1241.2,882.0 L1242.0,897.4 L1242.9,889.4 L1243.7,903.0 L1244.4,893.0 L1245.3,907.2 L1246.0,898.8 L1247.1,913.0 L1248.0,894.2 L1248.9,916.6 L1250.0,903.3 L1250.7,916.5 L1251.6,895.0 L1252.4,908.8 L1252.9,892.6 L1253.9,901.6 L1254.5,886.7 L1255.6,882.4 L1256.3,864.7 L1256.4,859.1 L1257.4,838.3 L1259.2,820.0" fill="none" stroke="#57ff00" stroke-width="1.3" stroke-linejoin="round" stroke-linecap="round"/>
<path d="M1259.2,820.0 C1259.8,803.7 1261.5,752.7 1263.1,722.1 C1264.7,691.5 1267.0,656.9 1268.7,636.5 C1270.4,616.1 1272.1,609.5 1273.2,600.0" fill="none" stroke="#57ff00" stroke-width="1.1" stroke-opacity="0.85" stroke-linejoin="round"/>
<path d="M1259.2,820.0 C1259.8,803.7 1261.5,752.7 1263.1,722.1 C1264.7,691.5 1267.0,656.9 1268.7,636.5 C1270.4,616.1 1272.1,609.5 1273.2,600.0" fill="none" stroke="#57ff00" stroke-width="2" stroke-dasharray="1.6 1.6" stroke-linejoin="round"/>
<path d="M1273.2,600.0 C1274.3,590.5 1274.7,585.3 1275.4,579.8" fill="none" stroke="#57ff00" stroke-width="2.0" stroke-linejoin="round" stroke-linecap="round"/>
<path d="M1275.4,579.8 C1275.8,577.6 1276.5,570.4 1277.6,566.7 C1278.7,563.1 1279.7,560.6 1281.9,557.9 C1284.1,555.1 1287.0,552.2 1290.7,550.2 C1294.4,548.2 1298.4,547.0 1303.9,545.8 C1309.4,544.6 1317.0,543.7 1323.6,543.0 C1330.2,542.3 1340.1,541.9 1343.4,541.7" fill="none" stroke="#57ff00" stroke-width="2.2" stroke-linejoin="round" stroke-linecap="round"/>
<path d="M1343.4,541.7 L1407.0,541.0 L1409.2,540.4 L1600.0,539.9" fill="none" stroke="#57ff00" stroke-width="2.2" stroke-linejoin="round" stroke-linecap="round"/>
<path d="M1196.5,553.5 L1202.5,553.5 L1199.5,559.5 Z" fill="none" stroke="#ff0000" stroke-width="1"/>
<path d="M1218.5,862.5 L1224.5,862.5 L1221.5,868.5 Z" fill="none" stroke="#0000ff" stroke-width="1"/>
<path d="M1253.5,855.5 L1259.5,855.5 L1256.5,861.5 Z" fill="none" stroke="#ffff00" stroke-width="1"/>
<path d="M724.9,399.1 C722.5,397.3 713.7,390.9 710.6,388.4 C707.5,385.9 708.9,386.7 706.3,384.1 C703.7,381.5 698.9,377.7 694.9,372.7 C690.9,367.7 685.7,360.6 682.1,354.2 C678.5,347.8 676.1,341.3 673.5,334.2 C670.9,327.1 668.1,317.8 666.4,311.4 C664.7,305.0 664.0,302.0 663.5,295.7 C663.0,289.4 663.1,279.9 663.2,273.5 C663.3,267.1 663.5,262.1 664.0,257.2 C664.5,252.3 665.3,248.4 666.4,244.1 C667.5,239.8 668.9,235.4 670.5,231.1 C672.1,226.8 673.9,222.9 676.2,218.0 C678.5,213.1 681.3,207.0 684.3,201.7 C687.3,196.4 690.3,191.2 694.1,186.3 C697.9,181.4 702.3,176.9 707.2,172.4 C712.1,167.9 718.1,163.4 723.5,159.3 C728.9,155.2 734.4,150.9 739.8,147.9 C745.2,144.9 750.2,143.6 756.1,141.4 C762.0,139.2 769.0,136.5 775.3,134.9 C781.6,133.3 786.0,132.6 794.0,132.0 C802.0,131.4 817.3,131.5 823.3,131.6 C829.3,131.7 825.1,131.2 830.0,132.3 C834.9,133.4 844.9,135.3 852.4,137.9 C859.9,140.5 868.1,144.4 874.8,148.0 C881.5,151.6 887.5,155.3 892.7,159.2 C897.9,163.1 902.0,166.8 906.1,171.5 C910.2,176.2 913.9,181.6 917.3,187.2 C920.7,192.8 923.9,199.5 926.3,205.1 C928.7,210.7 930.6,214.4 931.9,220.7 C933.2,227.0 934.1,235.6 934.1,243.1 C934.1,250.6 933.2,258.8 931.9,265.5 C930.6,272.2 928.7,277.8 926.3,283.4 C923.9,289.0 921.4,294.2 917.3,299.1 C913.2,304.0 906.8,308.9 901.6,312.5 C896.4,316.1 892.0,318.2 886.0,320.4 C880.0,322.6 871.9,324.7 865.8,325.5 C859.7,326.3 853.8,325.9 849.2,325.0 C844.6,324.1 841.2,322.0 838.0,320.4 C834.8,318.8 832.4,317.4 829.9,315.3 C827.4,313.2 824.8,310.8 822.8,308.1 C820.8,305.4 819.2,302.1 818.2,299.0 C817.2,295.9 816.5,292.1 816.7,289.8 C817.0,287.5 819.2,286.0 819.7,285.2" fill="none" stroke="#57ff00" stroke-width="1.1" stroke-opacity="0.85" stroke-linejoin="round"/>
<path d="M724.9,399.1 C722.5,397.3 713.7,390.9 710.6,388.4 C707.5,385.9 708.9,386.7 706.3,384.1 C703.7,381.5 698.9,377.7 694.9,372.7 C690.9,367.7 685.7,360.6 682.1,354.2 C678.5,347.8 676.1,341.3 673.5,334.2 C670.9,327.1 668.1,317.8 666.4,311.4 C664.7,305.0 664.0,302.0 663.5,295.7 C663.0,289.4 663.1,279.9 663.2,273.5 C663.3,267.1 663.5,262.1 664.0,257.2 C664.5,252.3 665.3,248.4 666.4,244.1 C667.5,239.8 668.9,235.4 670.5,231.1 C672.1,226.8 673.9,222.9 676.2,218.0 C678.5,213.1 681.3,207.0 684.3,201.7 C687.3,196.4 690.3,191.2 694.1,186.3 C697.9,181.4 702.3,176.9 707.2,172.4 C712.1,167.9 718.1,163.4 723.5,159.3 C728.9,155.2 734.4,150.9 739.8,147.9 C745.2,144.9 750.2,143.6 756.1,141.4 C762.0,139.2 769.0,136.5 775.3,134.9 C781.6,133.3 786.0,132.6 794.0,132.0 C802.0,131.4 817.3,131.5 823.3,131.6 C829.3,131.7 825.1,131.2 830.0,132.3 C834.9,133.4 844.9,135.3 852.4,137.9 C859.9,140.5 868.1,144.4 874.8,148.0 C881.5,151.6 887.5,155.3 892.7,159.2 C897.9,163.1 902.0,166.8 906.1,171.5 C910.2,176.2 913.9,181.6 917.3,187.2 C920.7,192.8 923.9,199.5 926.3,205.1 C928.7,210.7 930.6,214.4 931.9,220.7 C933.2,227.0 934.1,235.6 934.1,243.1 C934.1,250.6 933.2,258.8 931.9,265.5 C930.6,272.2 928.7,277.8 926.3,283.4 C923.9,289.0 921.4,294.2 917.3,299.1 C913.2,304.0 906.8,308.9 901.6,312.5 C896.4,316.1 892.0,318.2 886.0,320.4 C880.0,322.6 871.9,324.7 865.8,325.5 C859.7,326.3 853.8,325.9 849.2,325.0 C844.6,324.1 841.2,322.0 838.0,320.4 C834.8,318.8 832.4,317.4 829.9,315.3 C827.4,313.2 824.8,310.8 822.8,308.1 C820.8,305.4 819.2,302.1 818.2,299.0 C817.2,295.9 816.5,292.1 816.7,289.8 C817.0,287.5 819.2,286.0 819.7,285.2" fill="none" stroke="#57ff00" stroke-width="2" stroke-dasharray="1.6 1.6" stroke-linejoin="round"/>
<path d="M845.2,303.6 C846.5,304.3 850.3,305.3 852.9,307.9 C855.5,310.5 858.9,314.7 861.0,319.3 C863.1,323.9 865.1,330.2 865.6,335.6 C866.1,341.0 865.6,347.0 864.3,351.9 C863.0,356.8 860.8,360.7 857.8,364.9 C854.8,369.1 850.5,374.0 846.4,377.1 C842.3,380.2 837.1,382.4 833.3,383.6 C829.5,384.8 826.6,385.2 823.6,384.5 C820.6,383.8 816.8,380.4 815.4,379.6" fill="none" stroke="#57ff00" stroke-width="1.1" stroke-opacity="0.85" stroke-linejoin="round"/>
<path d="M845.2,303.6 C846.5,304.3 850.3,305.3 852.9,307.9 C855.5,310.5 858.9,314.7 861.0,319.3 C863.1,323.9 865.1,330.2 865.6,335.6 C866.1,341.0 865.6,347.0 864.3,351.9 C863.0,356.8 860.8,360.7 857.8,364.9 C854.8,369.1 850.5,374.0 846.4,377.1 C842.3,380.2 837.1,382.4 833.3,383.6 C829.5,384.8 826.6,385.2 823.6,384.5 C820.6,383.8 816.8,380.4 815.4,379.6" fill="none" stroke="#57ff00" stroke-width="2" stroke-dasharray="1.6 1.6" stroke-linejoin="round"/>
<path d="M815.4,379.6 C816.1,380.3 818.7,382.0 819.5,383.6 C820.3,385.2 820.7,386.7 820.3,389.3 C819.9,391.9 819.2,396.0 817.0,399.1 C814.8,402.2 811.1,405.7 807.3,408.1 C803.5,410.6 799.1,412.3 794.2,413.8 C789.3,415.3 783.3,416.8 777.9,417.0 C772.5,417.2 767.4,416.5 761.7,415.1 C756.0,413.8 749.4,411.3 743.7,408.9 C738.0,406.5 730.6,402.3 727.5,400.7 C724.4,399.1 725.3,399.4 724.9,399.1" fill="none" stroke="#57ff00" stroke-width="1.1" stroke-opacity="0.85" stroke-linejoin="round"/>
<path d="M815.4,379.6 C816.1,380.3 818.7,382.0 819.5,383.6 C820.3,385.2 820.7,386.7 820.3,389.3 C819.9,391.9 819.2,396.0 817.0,399.1 C814.8,402.2 811.1,405.7 807.3,408.1 C803.5,410.6 799.1,412.3 794.2,413.8 C789.3,415.3 783.3,416.8 777.9,417.0 C772.5,417.2 767.4,416.5 761.7,415.1 C756.0,413.8 749.4,411.3 743.7,408.9 C738.0,406.5 730.6,402.3 727.5,400.7 C724.4,399.1 725.3,399.4 724.9,399.1" fill="none" stroke="#57ff00" stroke-width="2" stroke-dasharray="1.6 1.6" stroke-linejoin="round"/>
<path d="M826.8,277.4 C828.0,278.1 831.8,280.0 834.0,281.7 C836.2,283.4 838.6,285.4 840.1,287.8 C841.6,290.2 842.6,292.8 843.1,295.9 C843.6,298.9 843.8,302.7 843.1,306.1 C842.4,309.5 841.1,313.6 839.1,316.3 C837.1,319.0 833.6,321.1 830.9,322.4 C828.2,323.7 825.3,324.6 822.8,323.9 C820.2,323.2 816.9,320.8 815.6,318.3 C814.3,315.9 814.2,311.8 815.1,309.2 C816.0,306.6 819.8,304.0 820.7,303.0" fill="none" stroke="#57ff00" stroke-width="2.6" stroke-linejoin="round" stroke-linecap="round"/>
<path d="M820.7,303.0 C822.1,302.6 825.8,300.9 828.9,300.5 C832.0,300.1 836.4,300.3 839.1,300.8 C841.8,301.3 844.2,303.1 845.2,303.6" fill="none" stroke="#57ff00" stroke-width="1.1" stroke-opacity="0.85" stroke-linejoin="round"/>
<path d="M820.7,303.0 C822.1,302.6 825.8,300.9 828.9,300.5 C832.0,300.1 836.4,300.3 839.1,300.8 C841.8,301.3 844.2,303.1 845.2,303.6" fill="none" stroke="#57ff00" stroke-width="2" stroke-dasharray="1.6 1.6" stroke-linejoin="round"/>
<path d="M826.8,277.4 C826.5,277.8 826.0,278.8 824.8,280.1 C823.6,281.4 821.6,283.8 819.7,285.2 C817.8,286.6 816.2,288.1 813.6,288.8 C811.0,289.5 807.3,290.0 804.4,289.3 C801.5,288.6 798.2,287.0 796.3,284.7 C794.3,282.4 793.1,278.6 792.7,275.5 C792.3,272.4 792.4,269.1 793.7,266.4 C795.0,263.7 797.8,260.8 800.4,259.3 C803.0,257.9 806.8,257.3 809.5,257.7 C812.2,258.1 815.1,259.9 816.7,261.8 C818.3,263.7 818.8,267.7 819.2,268.9" fill="none" stroke="#57ff00" stroke-width="3" stroke-linejoin="round" stroke-linecap="round"/>
<path d="M841.5,300.5 L847.5,300.5 L844.5,306.5 Z" fill="none" stroke="#ff0000" stroke-width="1"/>
<path d="M704.5,382.5 L710.5,382.5 L707.5,388.5 Z" fill="none" stroke="#0000ff" stroke-width="1"/>
<path d="M791.5,129.5 L797.5,129.5 L794.5,135.5 Z" fill="none" stroke="#ffff00" stroke-width="1"/>
<path d="M996.8,696.8 C995.8,693.8 993.8,685.6 991.1,678.5 C988.5,671.4 985.0,661.9 980.9,654.1 C976.8,646.3 971.7,638.4 966.6,631.6 C961.5,624.8 956.1,619.1 950.3,613.3 C944.5,607.5 938.5,601.6 932.0,597.0 C925.5,592.4 920.1,589.5 911.6,585.8 C903.1,582.1 891.3,577.8 881.1,574.6 C870.9,571.4 859.6,568.1 850.5,566.5 C841.4,564.9 834.8,564.6 826.4,564.8 C818.0,565.0 807.7,566.2 800.0,567.5 C792.3,568.8 786.0,570.8 780.0,572.7 C774.0,574.6 769.6,576.1 763.9,578.8 C758.1,581.4 751.4,585.0 745.5,588.6 C739.6,592.2 734.3,595.4 728.4,600.2 C722.5,605.0 715.4,611.6 710.1,617.3 C704.8,623.0 700.6,628.7 696.7,634.4 C692.8,640.1 690.0,645.2 686.9,651.5 C683.8,657.8 680.6,665.0 678.3,672.3 C676.0,679.5 674.2,687.4 673.0,695.0 C671.8,702.6 671.2,710.5 671.0,718.0 C670.8,725.5 671.3,733.8 671.6,740.0 C671.9,746.2 671.1,747.1 672.6,755.5 C674.1,763.9 677.3,779.0 680.7,790.2 C684.1,801.4 688.2,813.0 693.0,822.8 C697.8,832.6 702.8,841.1 709.2,849.2 C715.6,857.3 722.8,864.8 731.6,871.6 C740.4,878.4 752.0,885.2 762.2,890.0 C772.4,894.8 782.0,897.7 792.7,900.2 C803.4,902.7 816.8,904.4 826.4,905.2 C836.0,906.0 841.4,906.6 850.5,905.2 C859.6,903.9 870.9,900.7 881.1,897.1 C891.3,893.5 901.4,889.2 911.6,883.9 C921.8,878.6 933.0,872.6 942.2,865.5 C951.4,858.4 959.8,849.2 966.6,841.1 C973.4,833.0 978.1,825.8 982.9,816.6 C987.7,807.4 992.0,795.6 995.2,786.1 C998.4,776.6 1000.8,768.1 1002.3,759.6 C1003.8,751.1 1004.0,739.3 1004.3,735.2" fill="none" stroke="#57ff00" stroke-width="2.4" stroke-linejoin="round" stroke-linecap="round"/>
<path d="M807.0,606.2 C798.7,606.3 779.2,608.1 770.0,610.0 C760.8,611.9 757.8,614.4 751.7,617.3 C745.6,620.1 737.8,624.2 733.3,627.1 C728.8,630.0 728.5,631.4 724.8,634.4 C721.1,637.4 715.4,641.3 711.3,645.4 C707.2,649.5 703.5,654.2 700.3,658.9 C697.0,663.6 695.1,666.8 691.8,673.5 C688.5,680.2 683.7,690.6 680.7,698.9 C677.7,707.2 674.8,716.4 673.6,723.3 C672.4,730.1 673.4,734.6 673.6,740.0 C673.8,745.4 672.7,747.8 674.6,755.5 C676.5,763.2 680.4,776.9 684.8,786.1 C689.2,795.3 694.3,802.5 701.1,810.5 C707.9,818.5 717.0,827.5 725.5,834.0 C734.0,840.5 742.5,845.0 752.0,849.2 C761.5,853.4 773.4,857.3 782.6,859.4 C791.8,861.5 800.8,861.7 807.0,861.9 C813.2,862.1 813.8,861.7 820.0,860.4 C826.2,859.1 835.9,857.8 844.4,854.3 C852.9,850.8 863.8,844.4 870.9,839.1 C878.0,833.9 882.5,828.9 887.2,822.8 C892.0,816.7 896.4,809.9 899.4,802.4 C902.4,794.9 904.2,784.1 905.2,777.6 C906.2,771.1 906.3,768.4 905.7,763.3 C905.1,758.2 903.2,751.7 901.7,747.0 C900.2,742.3 897.3,737.7 896.5,735.0 C895.7,732.3 896.6,734.8 897.1,730.7 C897.6,726.6 899.4,717.2 899.6,710.4 C899.9,703.6 900.0,697.4 898.6,690.0 C897.2,682.6 894.5,673.6 891.3,666.3 C888.0,658.9 884.2,652.3 879.1,645.9 C874.0,639.5 867.2,632.5 860.7,627.6 C854.2,622.7 847.2,619.5 840.4,616.4 C833.6,613.3 825.6,610.9 820.0,609.2 C814.4,607.5 815.3,606.1 807.0,606.2Z" fill="none" stroke="#57ff00" stroke-width="1.1" stroke-opacity="0.85" stroke-linejoin="round"/>
<path d="M807.0,606.2 C798.7,606.3 779.2,608.1 770.0,610.0 C760.8,611.9 757.8,614.4 751.7,617.3 C745.6,620.1 737.8,624.2 733.3,627.1 C728.8,630.0 728.5,631.4 724.8,634.4 C721.1,637.4 715.4,641.3 711.3,645.4 C707.2,649.5 703.5,654.2 700.3,658.9 C697.0,663.6 695.1,666.8 691.8,673.5 C688.5,680.2 683.7,690.6 680.7,698.9 C677.7,707.2 674.8,716.4 673.6,723.3 C672.4,730.1 673.4,734.6 673.6,740.0 C673.8,745.4 672.7,747.8 674.6,755.5 C676.5,763.2 680.4,776.9 684.8,786.1 C689.2,795.3 694.3,802.5 701.1,810.5 C707.9,818.5 717.0,827.5 725.5,834.0 C734.0,840.5 742.5,845.0 752.0,849.2 C761.5,853.4 773.4,857.3 782.6,859.4 C791.8,861.5 800.8,861.7 807.0,861.9 C813.2,862.1 813.8,861.7 820.0,860.4 C826.2,859.1 835.9,857.8 844.4,854.3 C852.9,850.8 863.8,844.4 870.9,839.1 C878.0,833.9 882.5,828.9 887.2,822.8 C892.0,816.7 896.4,809.9 899.4,802.4 C902.4,794.9 904.2,784.1 905.2,777.6 C906.2,771.1 906.3,768.4 905.7,763.3 C905.1,758.2 903.2,751.7 901.7,747.0 C900.2,742.3 897.3,737.7 896.5,735.0 C895.7,732.3 896.6,734.8 897.1,730.7 C897.6,726.6 899.4,717.2 899.6,710.4 C899.9,703.6 900.0,697.4 898.6,690.0 C897.2,682.6 894.5,673.6 891.3,666.3 C888.0,658.9 884.2,652.3 879.1,645.9 C874.0,639.5 867.2,632.5 860.7,627.6 C854.2,622.7 847.2,619.5 840.4,616.4 C833.6,613.3 825.6,610.9 820.0,609.2 C814.4,607.5 815.3,606.1 807.0,606.2Z" fill="none" stroke="#57ff00" stroke-width="2" stroke-dasharray="1.6 1.6" stroke-linejoin="round"/>
<path d="M826.0,734.0 C826.4,732.8 823.7,731.8 825.3,728.7 C826.9,725.6 830.8,718.5 835.5,715.5 C840.2,712.5 847.9,711.1 853.8,710.9 C859.7,710.7 865.8,712.4 871.1,714.4 C876.4,716.4 881.5,719.4 885.4,722.6 C889.3,725.8 893.5,730.1 894.5,733.8 C895.5,737.5 893.4,741.1 891.5,745.0 C889.6,748.9 886.7,753.5 883.3,757.2 C879.9,760.9 876.2,764.5 871.1,767.4 C866.0,770.3 858.2,773.6 852.8,774.5 C847.4,775.4 842.9,774.2 838.5,772.5 C834.1,770.8 829.4,767.6 826.3,764.4 C823.2,761.2 820.9,756.3 819.7,753.1 C818.5,749.9 818.6,747.9 819.2,745.0 C819.8,742.1 822.1,737.6 823.2,735.8 C824.3,734.0 825.6,735.2 826.0,734.0Z" fill="none" stroke="#57ff00" stroke-width="1.1" stroke-opacity="0.85" stroke-linejoin="round"/>
<path d="M826.0,734.0 C826.4,732.8 823.7,731.8 825.3,728.7 C826.9,725.6 830.8,718.5 835.5,715.5 C840.2,712.5 847.9,711.1 853.8,710.9 C859.7,710.7 865.8,712.4 871.1,714.4 C876.4,716.4 881.5,719.4 885.4,722.6 C889.3,725.8 893.5,730.1 894.5,733.8 C895.5,737.5 893.4,741.1 891.5,745.0 C889.6,748.9 886.7,753.5 883.3,757.2 C879.9,760.9 876.2,764.5 871.1,767.4 C866.0,770.3 858.2,773.6 852.8,774.5 C847.4,775.4 842.9,774.2 838.5,772.5 C834.1,770.8 829.4,767.6 826.3,764.4 C823.2,761.2 820.9,756.3 819.7,753.1 C818.5,749.9 818.6,747.9 819.2,745.0 C819.8,742.1 822.1,737.6 823.2,735.8 C824.3,734.0 825.6,735.2 826.0,734.0Z" fill="none" stroke="#57ff00" stroke-width="2" stroke-dasharray="1.6 1.6" stroke-linejoin="round"/>
<path d="M804.5,604.5 L810.5,604.5 L807.5,610.5 Z" fill="none" stroke="#ff0000" stroke-width="1"/>
<path d="M823.5,732.5 L829.5,732.5 L826.5,738.5 Z" fill="none" stroke="#0000ff" stroke-width="1"/>
<path d="M822.5,731.5 L828.5,731.5 L825.5,737.5 Z" fill="none" stroke="#ffff00" stroke-width="1"/>
</svg>
</body></html>
